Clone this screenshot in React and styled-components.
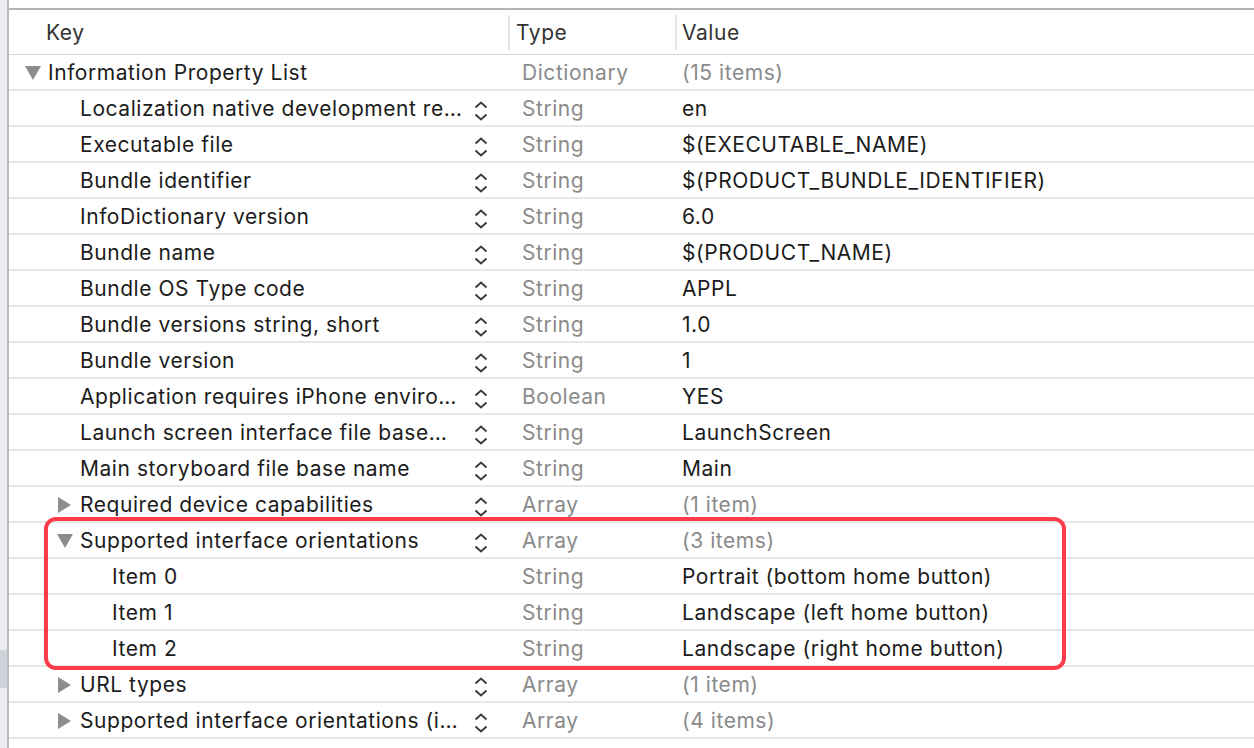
import styled, { createGlobalStyle } from "styled-components";

const GlobalStyle = createGlobalStyle`
  html, body {
    margin: 0;
    padding: 0;
    background: #fff;
  }
  body {
    font-family: "Inter", "Roboto", "Liberation Sans", sans-serif;
    -webkit-font-smoothing: antialiased;
  }
`

// keys are shown the way Xcode truncates them in a narrow Key column
const rows = [
  { key: "Information Property List", type: "Dictionary", value: "(15 items)", level: 0, toggle: "open", dim: true },
  { key: "Localization native development re…", type: "String", value: "en", level: 1, stepper: true },
  { key: "Executable file", type: "String", value: "$(EXECUTABLE_NAME)", level: 1, stepper: true },
  { key: "Bundle identifier", type: "String", value: "$(PRODUCT_BUNDLE_IDENTIFIER)", level: 1, stepper: true },
  { key: "InfoDictionary version", type: "String", value: "6.0", level: 1, stepper: true },
  { key: "Bundle name", type: "String", value: "$(PRODUCT_NAME)", level: 1, stepper: true },
  { key: "Bundle OS Type code", type: "String", value: "APPL", level: 1, stepper: true },
  { key: "Bundle versions string, short", type: "String", value: "1.0", level: 1, stepper: true },
  { key: "Bundle version", type: "String", value: "1", level: 1, stepper: true },
  { key: "Application requires iPhone enviro…", type: "Boolean", value: "YES", level: 1, stepper: true },
  { key: "Launch screen interface file base…", type: "String", value: "LaunchScreen", level: 1, stepper: true },
  { key: "Main storyboard file base name", type: "String", value: "Main", level: 1, stepper: true },
  { key: "Required device capabilities", type: "Array", value: "(1 item)", level: 1, toggle: "closed", stepper: true, dim: true },
]

const highlighted = [
  { key: "Supported interface orientations", type: "Array", value: "(3 items)", level: 1, toggle: "open", stepper: true, dim: true },
  { key: "Item 0", type: "String", value: "Portrait (bottom home button)", level: 2 },
  { key: "Item 1", type: "String", value: "Landscape (left home button)", level: 2 },
  { key: "Item 2", type: "String", value: "Landscape (right home button)", level: 2 },
]

const after = [
  { key: "URL types", type: "Array", value: "(1 item)", level: 1, toggle: "closed", stepper: true, dim: true },
  { key: "Supported interface orientations (i…", type: "Array", value: "(4 items)", level: 1, toggle: "closed", stepper: true, dim: true },
]

const Page = styled.div`
  display: flex;
  width: 1254px;
  height: 748px;
  overflow: hidden;
`

const Gutter = styled.div`
  width: 7px;
  flex-shrink: 0;
  background: #ececf0;
  border-right: 2px solid #bdbdbd;
  display: flex;
  flex-direction: column;
`

const GutterSelection = styled.div`
  margin-top: 650px;
  height: 38px;
  background: #cfd3dc;
`

const Main = styled.div`
  flex: 1;
  display: flex;
  flex-direction: column;
  padding-top: 8px;
  font-size: 21px;
  letter-spacing: 0.55px;
`

const TopRule = styled.div`
  height: 2px;
  background: #b3b3b3;
`

const columns = `499px 167px 1fr`

const Header = styled.div`
  display: grid;
  grid-template-columns: ${columns};
  height: 45px;
  border-bottom: 1px solid #dadada;
  box-sizing: border-box;
  align-items: center;
  color: #333;
`

const HeaderCell = styled.div`
  height: 35px;
  display: flex;
  align-items: center;
  padding-left: ${p => p.$pad}px;
  border-left: ${p => (p.$divider ? "2px solid #e4e4e4" : "none")};
`

const Row = styled.div`
  display: grid;
  grid-template-columns: ${columns};
  height: 36px;
  box-sizing: border-box;
  border-bottom: 2px solid #e7e7e7;
  align-items: center;
  padding-top: 1px;
`

const KeyCell = styled.div`
  display: flex;
  align-items: center;
  padding-left: ${p => 16 + p.$level * 32}px;
  padding-right: 20px;
  min-width: 0;
  color: #1c1c1c;
`

const Toggle = styled.span`
  width: 23px;
  flex-shrink: 0;
  display: flex;
  align-items: center;
`

const KeyText = styled.span`
  flex: 1;
  min-width: 0;
  white-space: nowrap;
`

const Stepper = styled.span`
  width: 14px;
  margin-left: 9px;
  flex-shrink: 0;
  display: flex;
  align-items: center;
  margin-top: 4px;
`

const TypeCell = styled.div`
  padding-left: 14px;
  color: #8a8a8a;
  white-space: nowrap;
`

const ValueCell = styled.div`
  padding-left: 7px;
  color: ${p => (p.$dim ? "#8a8a8a" : "#1c1c1c")};
  white-space: nowrap;
`

const Highlight = styled.div`
  position: relative;

  &::after {
    content: "";
    position: absolute;
    left: 35px;
    width: 1022px;
    top: -6px;
    bottom: -3px;
    box-sizing: border-box;
    border: 4px solid #fc3b4b;
    border-radius: 12px;
    pointer-events: none;
  }
`

function Triangle({ open }) {
  return open ? (
    <svg width="16" height="14" viewBox="0 0 16 14">
      <polygon points="0,0 16,0 8,14" fill="#8c8c8c" />
    </svg>
  ) : (
    <svg width="14" height="16" viewBox="0 0 14 16">
      <polygon points="1,0 14,8 1,16" fill="#8c8c8c" />
    </svg>
  )
}

function UpDown() {
  return (
    <svg width="14" height="20" viewBox="0 0 14 20">
      <path d="M1.5 6.5 L7 1.5 L12.5 6.5" fill="none" stroke="#3e3e3e" strokeWidth="2" />
      <path d="M1.5 13.5 L7 18.5 L12.5 13.5" fill="none" stroke="#3e3e3e" strokeWidth="2" />
    </svg>
  )
}

function PlistRow({ row }) {
  return (
    <Row>
      <KeyCell $level={row.level}>
        <Toggle>{row.toggle && <Triangle open={row.toggle === "open"} />}</Toggle>
        <KeyText>{row.key}</KeyText>
        {row.stepper ? <Stepper><UpDown /></Stepper> : <Stepper />}
      </KeyCell>
      <TypeCell>{row.type}</TypeCell>
      <ValueCell $dim={row.dim}>{row.value}</ValueCell>
    </Row>
  )
}

export default function App() {
  return (
    <>
      <GlobalStyle />
      <Page>
        <Gutter>
          <GutterSelection />
        </Gutter>
        <Main>
          <TopRule />
          <Header>
            <HeaderCell $pad={37}>Key</HeaderCell>
            <HeaderCell $pad={6} $divider>Type</HeaderCell>
            <HeaderCell $pad={5} $divider>Value</HeaderCell>
          </Header>
          {rows.map(row => <PlistRow key={row.key} row={row} />)}
          <Highlight>
            {highlighted.map(row => <PlistRow key={row.key} row={row} />)}
          </Highlight>
          {after.map(row => <PlistRow key={row.key} row={row} />)}
        </Main>
      </Page>
    </>
  )
}
